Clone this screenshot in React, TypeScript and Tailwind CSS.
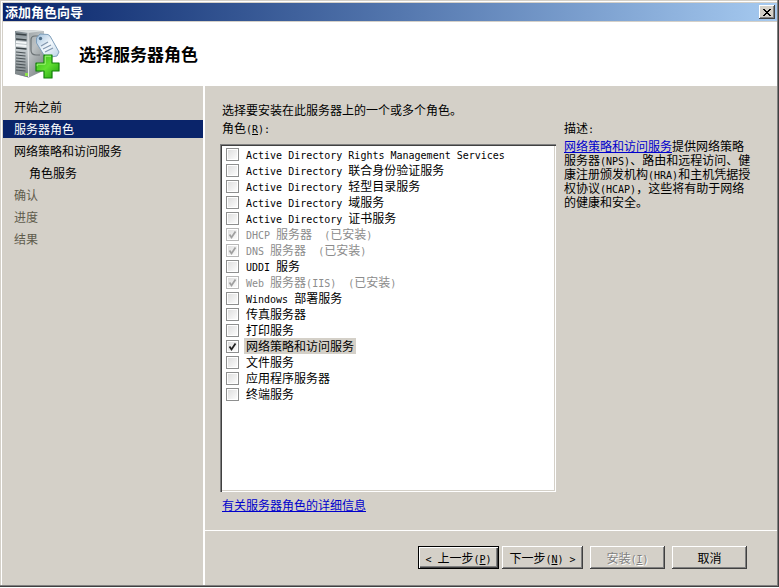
import { useState } from "react";
import type { ReactNode } from "react";
import clsx from "clsx";

const steps = [
	{ label: "开始之前" },
	{ label: "服务器角色", active: true },
	{ label: "网络策略和访问服务" },
	{ label: "角色服务", child: true },
	{ label: "确认", disabled: true },
	{ label: "进度", disabled: true },
	{ label: "结果", disabled: true },
];

const roles = [
	{ id: "adrms", label: "Active Directory Rights Management Services" },
	{ id: "adfs", label: "Active Directory 联合身份验证服务" },
	{ id: "adlds", label: "Active Directory 轻型目录服务" },
	{ id: "adds", label: "Active Directory 域服务" },
	{ id: "adcs", label: "Active Directory 证书服务" },
	{ id: "dhcp", label: "DHCP 服务器  (已安装)", installed: true },
	{ id: "dns", label: "DNS 服务器  (已安装)", installed: true },
	{ id: "uddi", label: "UDDI 服务" },
	{ id: "web", label: "Web 服务器(IIS)  (已安装)", installed: true },
	{ id: "wds", label: "Windows 部署服务" },
	{ id: "fax", label: "传真服务器" },
	{ id: "print", label: "打印服务" },
	{ id: "nps", label: "网络策略和访问服务" },
	{ id: "file", label: "文件服务" },
	{ id: "app", label: "应用程序服务器" },
	{ id: "ts", label: "终端服务" },
];

// half-width characters take exactly half of a CJK cell
function Latin({ children }: { children: ReactNode }) {
	return (
		<span className="font-['DejaVu_Sans_Mono',monospace] text-[10px] leading-none whitespace-pre">
			{children}
		</span>
	);
}

function Mixed({ text }: { text: string }) {
	return (
		<>
			{text
				.split(/([\x20-\x7e]+)/)
				.filter(Boolean)
				.map((part, i) =>
					/^[\x20-\x7e]/.test(part) ? <Latin key={i}>{part}</Latin> : part
				)}
		</>
	);
}

function Key({ letter }: { letter: string }) {
	return (
		<Latin>
			(<span className="underline underline-offset-1">{letter}</span>)
		</Latin>
	);
}

function ServerIcon() {
	return (
		<svg width="48" height="52" viewBox="0 0 48 52" aria-hidden="true">
			<defs>
				<linearGradient id="side" x1="0" y1="0" x2="1" y2="1">
					<stop offset="0" stopColor="#878f92" />
					<stop offset="0.5" stopColor="#bcc1c3" />
					<stop offset="1" stopColor="#6f7779" />
				</linearGradient>
				<linearGradient id="front" x1="0" y1="0" x2="0" y2="1">
					<stop offset="0" stopColor="#7b868c" />
					<stop offset="0.35" stopColor="#c9d0d3" />
					<stop offset="1" stopColor="#767e81" />
				</linearGradient>
				<linearGradient id="tag" x1="0" y1="0" x2="1" y2="1">
					<stop offset="0" stopColor="#9fbfdb" />
					<stop offset="0.5" stopColor="#f3f8fc" />
					<stop offset="1" stopColor="#b9d2e6" />
				</linearGradient>
				<linearGradient id="plus" x1="0" y1="0" x2="1" y2="1">
					<stop offset="0" stopColor="#35b515" />
					<stop offset="0.5" stopColor="#62e032" />
					<stop offset="1" stopColor="#1c9c0c" />
				</linearGradient>
			</defs>
			<path d="M1 3 13 2 30 3 31 42 15 49.500 1 46Z" fill="url(#side)" />
			<path d="M1 3 14 4 14.500 49.500 1 46Z" fill="url(#front)" />
			<path d="M1 3 12 2 30 3 14 5Z" fill="#d5dadb" />
			<path d="M14 5 14.500 49" stroke="#eef0f1" strokeWidth="1" />
			<path d="M2 6 12.500 7M2 11 12.500 12M2 20 12.500 21" stroke="#3a4347" strokeWidth="1.3" />
			<path d="M2 14 12.500 15M2 17 12.500 18" stroke="#f4f7f8" strokeWidth="1.8" />
			<path
				d="M2 24 11.500 25M2 27 11.500 28M2 30 11.500 31M2 33 11.500 34M2 36 11.500 37M2 39 11.500 40M2 42 11.500 43"
				stroke="#4a5256"
				strokeWidth="1.2"
			/>
			<path d="M11 45h3v3h-3z" fill="#8ee04c" />
			<path
				d="M26 8h-5c-3 0-4 1-4 4v10c0 4 2 5 5 5h4"
				fill="none"
				stroke="#6c7376"
				strokeWidth="1.2"
			/>
			<path
				d="M22.500 10 26 6 34 6.500 36 8 45 24 43 28 34 29.500 30 27 22.500 15Z"
				fill="url(#tag)"
				stroke="#7f9fbb"
				strokeWidth="1"
				strokeLinejoin="round"
			/>
			<circle cx="26.500" cy="10.500" r="1.700" fill="#4f6d88" />
			<path d="M27 18 34 14M29 21 37 17M31 24 39 20" stroke="#8296ae" strokeWidth="1.2" />
			<path
				d="M30 27h8v8h7v8h-7v7h-8v-7h-8v-8h8z"
				fill="url(#plus)"
				stroke="#118009"
				strokeWidth="1.2"
				strokeLinejoin="round"
			/>
			<path d="M37 28.200h-5.800V36.200H23.200v2" fill="none" stroke="#a3f57c" strokeWidth="1" />
		</svg>
	);
}

function WizardButton({
	children,
	disabled,
	primary,
	wide,
}: {
	children: ReactNode;
	disabled?: boolean;
	primary?: boolean;
	wide?: boolean;
}) {
	return (
		<button
			type="button"
			disabled={disabled}
			className={clsx(
				"h-[23px] whitespace-pre bg-[#d4d0c8] leading-[21px]",
				wide ? "w-[81px]" : "w-[75px]",
				primary
					? "border border-black shadow-[inset_1px_1px_#fff,inset_-1px_-1px_#404040,inset_-2px_-2px_#808080]"
					: "shadow-[inset_-1px_-1px_#404040,inset_1px_1px_#fff,inset_-2px_-2px_#808080]",
				disabled && "text-[#808080] [text-shadow:1px_1px_#fff]"
			)}>
			{children}
		</button>
	);
}

export default function App() {
	const [selected, setSelected] = useState<string[]>(["nps"]);

	const toggle = (id: string) =>
		setSelected((prev) =>
			prev.includes(id) ? prev.filter((x) => x !== id) : [...prev, id]
		);

	return (
		<div className="min-h-screen flex flex-col bg-white pb-px font-['Noto_Sans_CJK_SC',sans-serif] text-[12px] leading-[18px] text-black">
			<div className="flex-1 flex flex-col bg-[#d4d0c8] pt-[3px] pl-[3px] pr-[2px] pb-[2px] shadow-[inset_-1px_-1px_#404040,inset_-2px_-2px_#808080,inset_1px_1px_#d4d0c8,inset_2px_2px_#fff]">
				<div className="flex items-center justify-between h-[18px] pl-[2px] pr-[2px] bg-linear-to-r from-[#0a246a] to-[#a6caf0]">
					<h1 className="text-[13px] font-bold text-white">添加角色向导</h1>
					<button
						type="button"
						aria-label="关闭"
						className="grid place-items-center w-4 h-[14px] bg-[#d4d0c8] shadow-[inset_-1px_-1px_#404040,inset_1px_1px_#fff,inset_-2px_-2px_#808080]">
						<svg width="8" height="7" viewBox="0 0 8 7" shapeRendering="crispEdges">
							<path
								d="M0 0h2v1h1v1h2V1h1V0h2v1H7v1H6v1H5v1h1v1h1v1h1v1H6V6H5V5H3v1H2v1H0V6h1V5h1V4h1V3H2V2H1V1H0z"
								fill="#000"
							/>
						</svg>
					</button>
				</div>

				<header className="flex items-center gap-[17px] h-16 mt-px pl-[11px] bg-white">
					<ServerIcon />
					<h2 className="text-[17px] font-bold">选择服务器角色</h2>
				</header>

				<div className="flex-1 flex">
					<nav className="w-[202px] shrink-0 border-r-2 border-white pt-3">
						<ul className="flex flex-col gap-1">
							{steps.map((step) => (
								<li
									key={step.label}
									aria-current={step.active ? "step" : undefined}
									className={clsx(
										"h-[18px]",
										step.child ? "pl-[26px]" : "pl-[11px]",
										step.active && "bg-[#0a246a] text-white",
										step.disabled && "text-[#5f5c4c]"
									)}>
									{step.label}
								</li>
							))}
						</ul>
					</nav>

					<div className="flex-1 flex flex-col min-w-0">
						<main className="flex-1 flex flex-col pt-[15px] pl-[15px] pr-[21px] pb-4">
							<p className="pl-[2px]">选择要安装在此服务器上的一个或多个角色。</p>
							<div className="flex-1 flex gap-2">
								<fieldset className="flex-1 flex flex-col min-w-0">
									<legend className="float-left h-[25px] pl-[2px]">
										角色
										<Key letter="R" />
										<Latin>:</Latin>
									</legend>
									<ul className="clear-both flex-1 p-[2px] bg-white shadow-[inset_1px_1px_#808080,inset_2px_2px_#404040,inset_-1px_-1px_#fff,inset_-2px_-2px_#d4d0c8]">
										{roles.map((role) => (
											<li key={role.id} className="h-4 leading-4">
												<label className="flex w-fit items-center gap-[5px] pl-1">
													<span className="relative w-[13px] h-[13px]">
														<input
															type="checkbox"
															checked={role.installed || selected.includes(role.id)}
															disabled={role.installed}
															onChange={() => toggle(role.id)}
															className="peer block appearance-none w-[13px] h-[13px] border border-[#8e8f8f] bg-linear-to-br from-[#dcdcdc] to-white shadow-[inset_0_0_0_1px_#fff] disabled:border-[#b8b8b8]"
														/>
														<svg
															viewBox="0 0 13 13"
															className="absolute inset-0 hidden pointer-events-none text-[#202020] peer-checked:block peer-disabled:text-[#a0a0a0]">
															<path
																d="M3.500 6.500 5.500 9.500 9.500 3.500"
																fill="none"
																stroke="currentColor"
																strokeWidth="1.8"
															/>
														</svg>
													</span>
													<span
														className={clsx(
															"px-[2px]",
															role.installed && "text-[#8c8c8c]",
															role.id === "nps" && "bg-[#d4d0c8]"
														)}>
														<Mixed text={role.label} />
													</span>
												</label>
											</li>
										))}
									</ul>
								</fieldset>
								<aside className="w-48 shrink-0">
									<h3 className="mb-[2px]">
										描述<Latin>:</Latin>
									</h3>
									<p className="leading-[14px]">
										<a href="#nps" className="text-[#0000cc] underline">
											网络策略和访问服务
										</a>
										提供网络策略
										<br />
										<Mixed text="服务器(NPS)、路由和远程访问、健" />
										<br />
										<Mixed text="康注册颁发机构(HRA)和主机凭据授" />
										<br />
										<Mixed text="权协议(HCAP)，这些将有助于网络" />
										<br />
										的健康和安全。
									</p>
								</aside>
							</div>
							<p className="mt-1 pl-[2px]">
								<a href="#roles" className="text-[#0000cc] underline">
									有关服务器角色的详细信息
								</a>
							</p>
						</main>

						<footer className="flex justify-end gap-[7px] border-t border-white pt-[15px] pr-[30px] pb-4">
							<div className="flex gap-[3px]">
								<WizardButton wide primary>
									<Latin>{"< "}</Latin>上一步
									<Key letter="P" />
								</WizardButton>
								<WizardButton wide>
									下一步
									<Key letter="N" />
									<Latin>{" >"}</Latin>
								</WizardButton>
							</div>
							<WizardButton disabled>
								安装
								<Key letter="I" />
							</WizardButton>
							<WizardButton>取消</WizardButton>
						</footer>
					</div>
				</div>
			</div>
		</div>
	);
}
